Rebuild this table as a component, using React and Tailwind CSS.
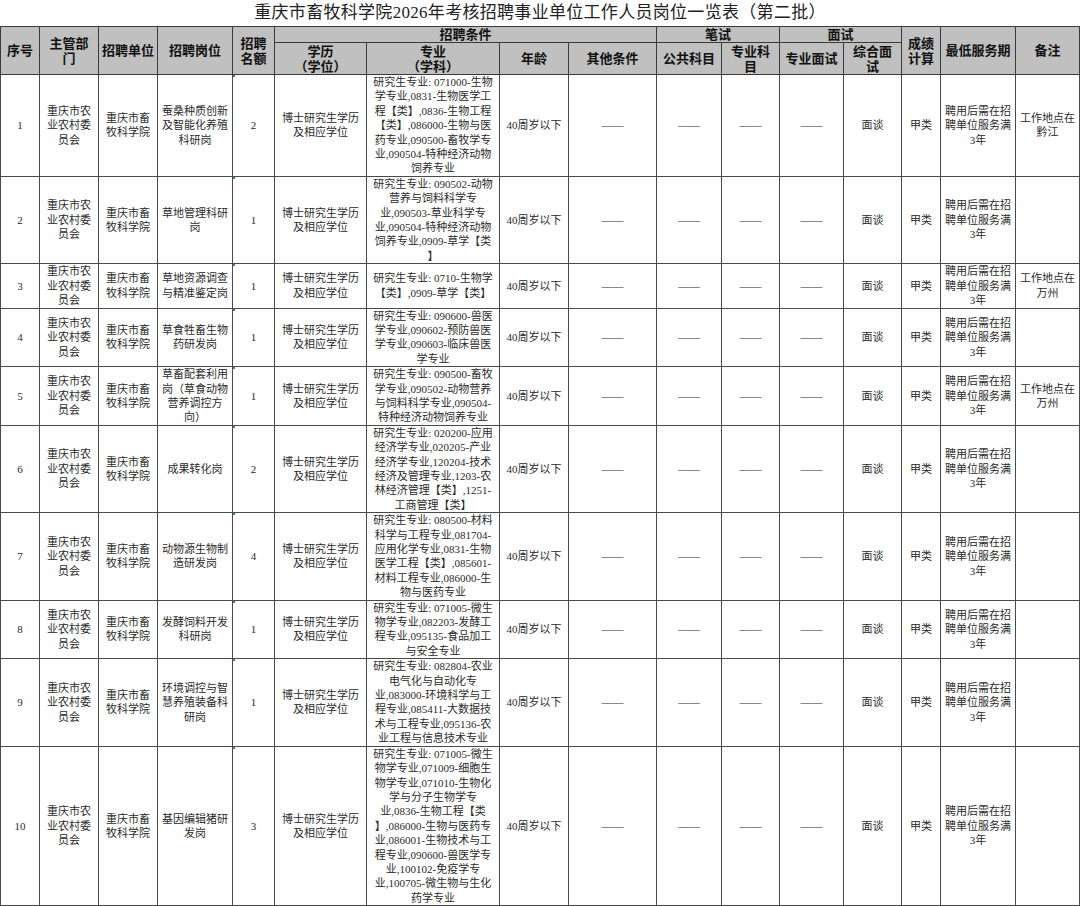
import React from 'react';

const rows = [
  {
    no: 1, h: 'h-[101px]', n: 2,
    post: ['蚕桑种质创新', '及智能化养殖', '科研岗'],
    major: ['研究生专业: 071000-生物', '学专业,0831-生物医学工', '程【类】,0836-生物工程', '【类】,086000-生物与医', '药专业,090500-畜牧学专', '业,090504-特种经济动物', '饲养专业'],
    note: ['工作地点在', '黔江'],
  },
  {
    no: 2, h: 'h-[86px]', n: 1,
    post: ['草地管理科研', '岗'],
    major: ['研究生专业: 090502-动物', '营养与饲料科学专', '业,090503-草业科学专', '业,090504-特种经济动物', '饲养专业,0909-草学【类', '】'],
  },
  {
    no: 3, h: 'h-[43px]', n: 1,
    post: ['草地资源调查', '与精准鉴定岗'],
    major: ['研究生专业: 0710-生物学', '【类】,0909-草学【类】'],
    note: ['工作地点在', '万州'],
  },
  {
    no: 4, h: 'h-[57px]', n: 1,
    post: ['草食牲畜生物', '药研发岗'],
    major: ['研究生专业: 090600-兽医', '学专业,090602-预防兽医', '学专业,090603-临床兽医', '学专业'],
  },
  {
    no: 5, h: 'h-[58px]', n: 1,
    post: ['草畜配套利用', '岗（草食动物', '营养调控方', '向）'],
    major: ['研究生专业: 090500-畜牧', '学专业,090502-动物营养', '与饲料科学专业,090504-', '特种经济动物饲养专业'],
    note: ['工作地点在', '万州'],
  },
  {
    no: 6, h: 'h-[86px]', n: 2,
    post: ['成果转化岗'],
    major: ['研究生专业: 020200-应用', '经济学专业,020205-产业', '经济学专业,120204-技术', '经济及管理专业,1203-农', '林经济管理【类】,1251-', '工商管理【类】'],
  },
  {
    no: 7, h: 'h-[87px]', n: 4,
    post: ['动物源生物制', '造研发岗'],
    major: ['研究生专业: 080500-材料', '科学与工程专业,081704-', '应用化学专业,0831-生物', '医学工程【类】,085601-', '材料工程专业,086000-生', '物与医药专业'],
  },
  {
    no: 8, h: 'h-[57px]', n: 1,
    post: ['发酵饲料开发', '科研岗'],
    major: ['研究生专业: 071005-微生', '物学专业,082203-发酵工', '程专业,095135-食品加工', '与安全专业'],
  },
  {
    no: 9, h: 'h-[86px]', n: 1,
    post: ['环境调控与智', '慧养殖装备科', '研岗'],
    major: ['研究生专业: 082804-农业', '电气化与自动化专', '业,083000-环境科学与工', '程专业,085411-大数据技', '术与工程专业,095136-农', '业工程与信息技术专业'],
  },
  {
    no: 10, h: 'h-[158px]', n: 3,
    post: ['基因编辑猪研', '发岗'],
    major: ['研究生专业: 071005-微生', '物学专业,071009-细胞生', '物学专业,071010-生物化', '学与分子生物学专', '业,0836-生物工程【类', '】,086000-生物与医药专', '业,086001-生物技术与工', '程专业,090600-兽医学专', '业,100102-免疫学专', '业,100705-微生物与生化', '药学专业'],
  },
];

const widths = [39, 59, 59, 75, 42, 92, 133, 69, 88, 65, 58, 64, 58, 39, 75, 64];

function Lines({ items }) {
  return items.map((t, i) => (
    <div key={i} className="whitespace-nowrap">{t}</div>
  ));
}

const th = 'border border-[#3a3a3a] bg-[#c0c0c0] text-center align-middle font-bold text-[13px] leading-[15px] text-[#111] p-0';
const td = 'border border-[#4a4a4a] text-center align-middle text-[11px] leading-[14.4px] text-[#2a2a2a] p-0 overflow-hidden';

export default function App() {
  return (
    <div className="w-[1080px] h-[906px] bg-white overflow-hidden font-['Liberation_Serif','Noto_Sans_CJK_SC',serif]">
      <div className="h-[26px] flex items-center justify-center text-[17px] text-[#222] tracking-[0.3px]">
        重庆市畜牧科学院2026年考核招聘事业单位工作人员岗位一览表（第二批）
      </div>
      <table className="table-fixed border-collapse w-[1079px]">
        <colgroup>
          {widths.map((w, i) => (
            <col key={i} style={{ width: w }} />
          ))}
        </colgroup>
        <thead>
          <tr className="h-[16px]">
            <th rowSpan={2} className={th}>序号</th>
            <th rowSpan={2} className={th}>主管部<br />门</th>
            <th rowSpan={2} className={th}>招聘单位</th>
            <th rowSpan={2} className={th}>招聘岗位</th>
            <th rowSpan={2} className={th}>招聘<br />名额</th>
            <th colSpan={4} className={th}>招聘条件</th>
            <th colSpan={2} className={th}>笔试</th>
            <th colSpan={2} className={th}>面试</th>
            <th rowSpan={2} className={th}>成绩<br />计算</th>
            <th rowSpan={2} className={th}>最低服务期</th>
            <th rowSpan={2} className={th}>备注</th>
          </tr>
          <tr className="h-[32px]">
            <th className={th}>学历<br />（学位）</th>
            <th className={th}>专业<br />（学科）</th>
            <th className={th}>年龄</th>
            <th className={th}>其他条件</th>
            <th className={th}>公共科目</th>
            <th className={th}>专业科<br />目</th>
            <th className={th}>专业面试</th>
            <th className={th}>综合面<br />试</th>
          </tr>
        </thead>
        <tbody>
          {rows.map((r) => (
            <tr key={r.no} className={r.h}>
              <td className={td}>{r.no}</td>
              <td className={td}><Lines items={['重庆市农', '业农村委', '员会']} /></td>
              <td className={td}><Lines items={['重庆市畜', '牧科学院']} /></td>
              <td className={td}><Lines items={r.post} /></td>
              <td className={`${td} relative`}>
                <span className="absolute top-0 left-0 w-[2px] h-[2px] bg-[#2e9b3a]" />
                {r.n}
              </td>
              <td className={td}><Lines items={['博士研究生学历', '及相应学位']} /></td>
              <td className={td}><Lines items={r.major} /></td>
              <td className={td}>40周岁以下</td>
              <td className={td}>——</td>
              <td className={td}>——</td>
              <td className={td}>——</td>
              <td className={td}>——</td>
              <td className={td}>面谈</td>
              <td className={td}>甲类</td>
              <td className={td}><Lines items={['聘用后需在招', '聘单位服务满', '3年']} /></td>
              <td className={td}>{r.note ? <Lines items={r.note} /> : null}</td>
            </tr>
          ))}
        </tbody>
      </table>
    </div>
  );
}
